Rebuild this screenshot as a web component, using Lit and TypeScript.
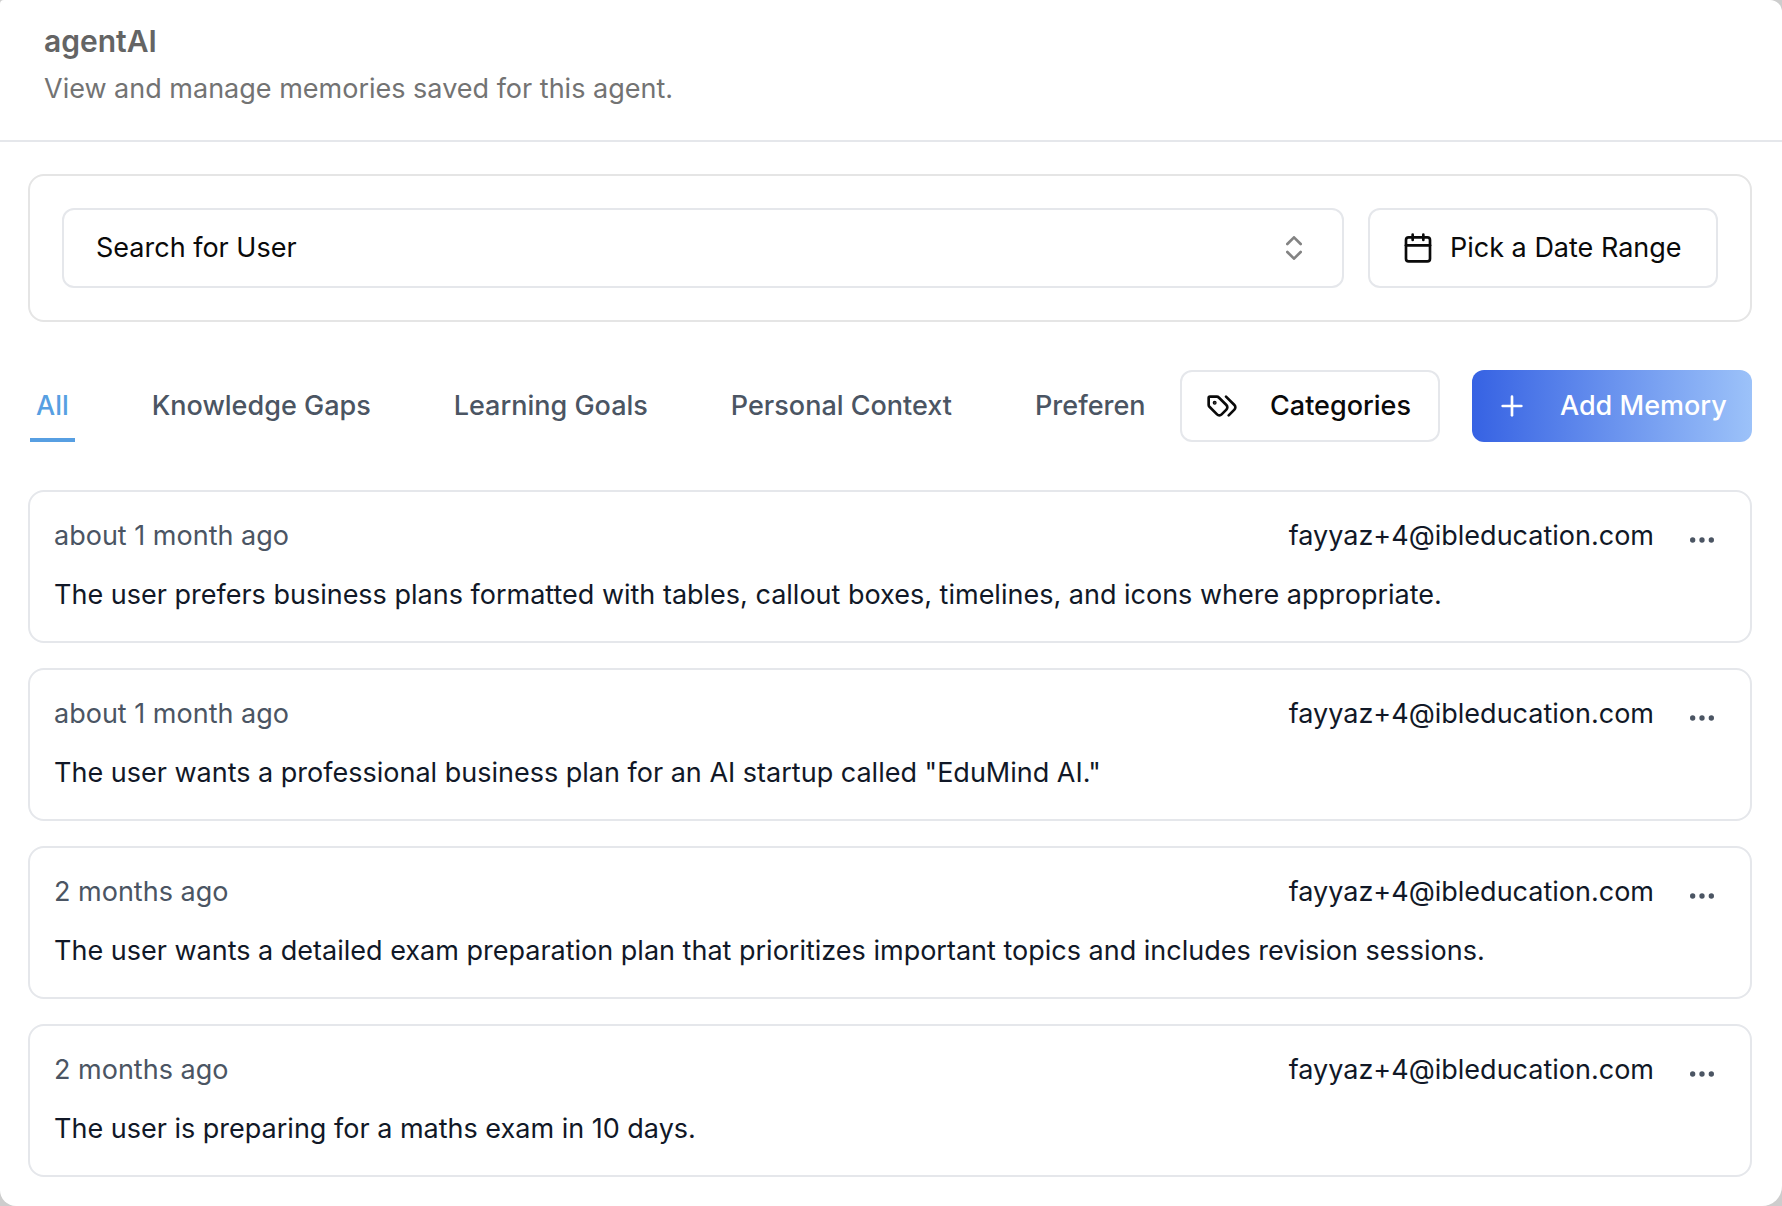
import { LitElement, html, css, svg } from "lit";
import { customElement, property, state } from "lit/decorators.js";

const icons = {
  calendar: svg`<path d="M8 2v4"/><path d="M16 2v4"/><rect width="18" height="18" x="3" y="4" rx="2"/><path d="M3 10h18"/>`,
  chevrons: svg`<path d="m7 15 5 5 5-5"/><path d="m7 9 5-5 5 5"/>`,
  tags: svg`<path d="m15 5 6.3 6.3a2.4 2.4 0 0 1 0 3.4L17 19"/><path d="M9.586 5.586A2 2 0 0 0 8.172 5H3a1 1 0 0 0-1 1v5.172a2 2 0 0 0 .586 1.414L8.29 18.29a2.426 2.426 0 0 0 3.42 0l3.58-3.58a2.426 2.426 0 0 0 0-3.42z"/><circle cx="6.5" cy="9.5" r=".5" fill="currentColor"/>`,
  plus: svg`<path d="M5 12h14"/><path d="M12 5v14"/>`,
  ellipsis: svg`<circle cx="12" cy="12" r="1"/><circle cx="19" cy="12" r="1"/><circle cx="5" cy="12" r="1"/>`,
};

@customElement("ui-icon")
export class UiIcon extends LitElement {
  static styles = css`
    :host {
      display: block;
      flex: none;
      width: 32px;
      height: 32px;
    }
    .glyph {
      display: block;
      width: 100%;
      height: 100%;
      fill: none;
      stroke: currentColor;
      stroke-width: 2;
      stroke-linecap: round;
      stroke-linejoin: round;
    }
  `;

  @property() name: keyof typeof icons = "plus";

  render() {
    return html`<svg class="glyph" viewBox="0 0 24 24" aria-hidden="true">${icons[this.name]}</svg>`;
  }
}

interface Memory {
  age: string;
  email: string;
  text: string;
}

@customElement("memory-card")
export class MemoryCard extends LitElement {
  static styles = css`
    :host {
      display: block;
    }
    .card {
      border: 2px solid #e5e7eb;
      border-radius: 16px;
      padding: 24px;
      background: #fff;
    }
    .meta {
      display: flex;
      align-items: flex-start;
      gap: 24px;
      line-height: 40px;
    }
    .age {
      flex: 1;
      color: #4b5563;
    }
    .email {
      color: #111827;
    }
    .more {
      display: flex;
      padding: 8px;
      border: 0;
      border-radius: 8px;
      background: none;
      color: #4b5563;
      cursor: pointer;
    }
    .text {
      margin: 8px 0 0;
      line-height: 45px;
      color: #111827;
    }
  `;

  @property({ attribute: false }) memory!: Memory;

  render() {
    const { age, email, text } = this.memory;
    return html`
      <article class="card">
        <div class="meta">
          <span class="age">${age}</span>
          <span class="email">${email}</span>
          <button class="more" type="button" aria-label="Memory actions">
            <ui-icon name="ellipsis"></ui-icon>
          </button>
        </div>
        <p class="text">${text}</p>
      </article>
    `;
  }
}

@customElement("app-root")
export class AppRoot extends LitElement {
  static styles = css`
    :host {
      display: block;
      min-height: 100vh;
      background: #cdcdcd;
      font-family: Inter, "Liberation Sans", sans-serif;
      font-size: 27px;
      line-height: 40px;
      color: #0a0a0a;
    }
    *,
    *::before,
    *::after {
      box-sizing: border-box;
    }
    button,
    select {
      font: inherit;
      color: inherit;
      cursor: pointer;
    }
    .panel {
      min-height: 100vh;
      background: #fff;
      border-radius: 4px 12px 20px 16px;
    }
    .header {
      padding: 20px 44px 31px;
      border-bottom: 2px solid #e5e7eb;
    }
    .title {
      margin: 0;
      font-size: 30px;
      font-weight: 600;
      line-height: 42px;
      color: #646464;
    }
    .subtitle {
      margin: 7px 0 0;
      color: #737373;
    }
    .body {
      display: grid;
      grid-template-columns: minmax(0, 1fr);
      gap: 48px;
      padding: 32px 30px 28px 28px;
    }
    .filters {
      display: flex;
      gap: 24px;
      padding: 32px;
      border: 2px solid #e5e5e5;
      border-radius: 16px;
    }
    .field {
      flex: 1;
      min-width: 0;
      display: grid;
      align-items: center;
    }
    .select {
      grid-area: 1 / 1;
      appearance: none;
      width: 100%;
      height: 80px;
      padding: 0 80px 0 32px;
      border: 2px solid #e5e7eb;
      border-radius: 12px;
      background: #fff;
    }
    .chevrons {
      grid-area: 1 / 1;
      justify-self: end;
      margin-right: 34px;
      opacity: 0.5;
      pointer-events: none;
    }
    .btn {
      flex: none;
      display: flex;
      align-items: center;
      justify-content: flex-start;
      border: 2px solid #e5e7eb;
      border-radius: 12px;
      background: #fff;
      white-space: nowrap;
    }
    .date {
      gap: 16px;
      min-width: 350px;
      height: 80px;
      padding: 0 32px;
    }
    .action {
      gap: 32px;
      min-width: 260px;
      height: 72px;
      padding: 0 24px;
      font-weight: 500;
    }
    .primary {
      min-width: 280px;
      border: 0;
      color: #fff;
      background: linear-gradient(to right, #3662e3, #9cc2f9);
    }
    .toolbar {
      display: flex;
      gap: 32px;
    }
    .tabs {
      flex: 1;
      min-width: 0;
      display: flex;
      gap: 71px;
      margin: 0 2px;
      overflow: hidden;
    }
    .tab {
      flex: none;
      padding: 4px 6px 0;
      border: 0;
      border-bottom: 4px solid transparent;
      background: none;
      font-weight: 500;
      color: #4b5563;
      white-space: nowrap;
    }
    .tab[aria-selected="true"] {
      color: #579fe2;
      border-bottom-color: #579fe2;
    }
    .list {
      display: grid;
      gap: 25px;
      margin: 0;
      padding: 0;
      list-style: none;
    }
  `;

  @state() private active = "All";

  private tabs = ["All", "Knowledge Gaps", "Learning Goals", "Personal Context", "Preferences"];

  private memories: Memory[] = [
    {
      age: "about 1 month ago",
      email: "fayyaz+4@ibleducation.com",
      text: "The user prefers business plans formatted with tables, callout boxes, timelines, and icons where appropriate.",
    },
    {
      age: "about 1 month ago",
      email: "fayyaz+4@ibleducation.com",
      text: 'The user wants a professional business plan for an AI startup called "EduMind AI."',
    },
    {
      age: "2 months ago",
      email: "fayyaz+4@ibleducation.com",
      text: "The user wants a detailed exam preparation plan that prioritizes important topics and includes revision sessions.",
    },
    {
      age: "2 months ago",
      email: "fayyaz+4@ibleducation.com",
      text: "The user is preparing for a maths exam in 10 days.",
    },
  ];

  render() {
    return html`
      <main class="panel">
        <header class="header">
          <h1 class="title">agentAI</h1>
          <p class="subtitle">View and manage memories saved for this agent.</p>
        </header>
        <div class="body">
          <section class="filters" aria-label="Filters">
            <div class="field">
              <select class="select" aria-label="Search for User">
                <option>Search for User</option>
              </select>
              <ui-icon class="chevrons" name="chevrons"></ui-icon>
            </div>
            <button class="btn date" type="button">
              <ui-icon name="calendar"></ui-icon>Pick a Date Range
            </button>
          </section>
          <div class="toolbar">
            <div class="tabs" role="tablist">
              ${this.tabs.map(
                (tab) => html`<button
                  class="tab"
                  type="button"
                  role="tab"
                  aria-selected=${tab === this.active ? "true" : "false"}
                  @click=${() => (this.active = tab)}
                >${tab}</button>`
              )}
            </div>
            <button class="btn action" type="button">
              <ui-icon name="tags"></ui-icon>Categories
            </button>
            <button class="btn action primary" type="button">
              <ui-icon name="plus"></ui-icon>Add Memory
            </button>
          </div>
          <ul class="list">
            ${this.memories.map((m) => html`<li><memory-card .memory=${m}></memory-card></li>`)}
          </ul>
        </div>
      </main>
    `;
  }
}
